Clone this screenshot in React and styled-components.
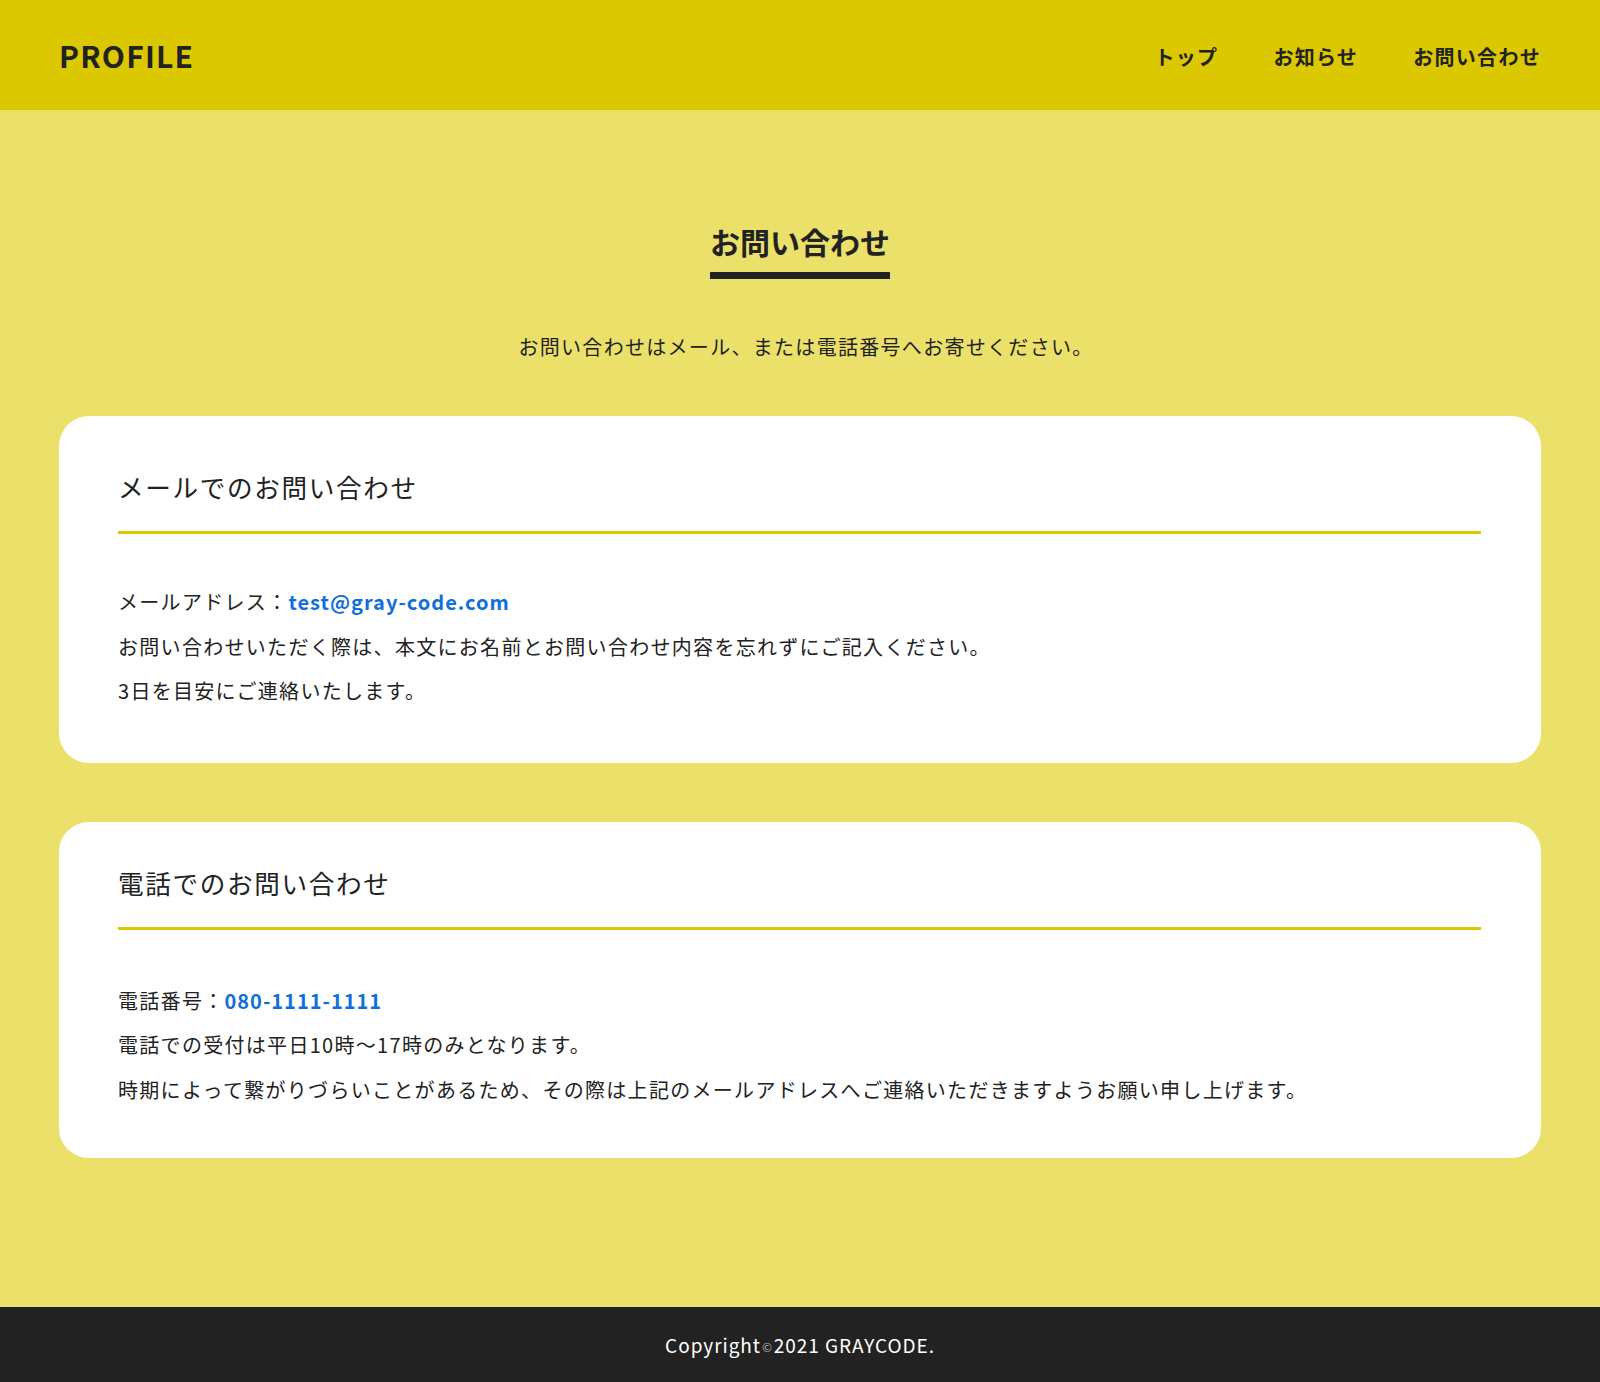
import React from 'react';
import styled, { createGlobalStyle } from 'styled-components';

const GlobalStyle = createGlobalStyle`
  body, html {
    margin: 0;
    padding: 0;
  }
  body {
    font-family: "Noto Sans CJK JP", "Noto Sans", sans-serif;
    background: #ebe16a;
    color: #222;
  }
`;

const Page = styled.div`
  min-height: 100vh;
  display: flex;
  flex-direction: column;
`;

const Header = styled.header`
  height: 110px;
  background: #dbc800;
  display: flex;
  align-items: center;
  justify-content: space-between;
  padding: 0 59px;
  box-sizing: border-box;
`;

const Logo = styled.h1`
  margin: 0;
  font-size: 30px;
  font-weight: 700;
  line-height: 1;
  letter-spacing: 0.04em;
  color: #222;
`;

const Nav = styled.ul`
  display: flex;
  gap: 55px;
  list-style: none;
  margin: 0;
  padding: 0;
`;

const NavLink = styled.a`
  font-size: 20px;
  font-weight: 700;
  color: #222;
  text-decoration: none;
  letter-spacing: 0.065em;
  line-height: 1;
  display: block;
  padding-top: 4px;
`;

const Main = styled.main`
  flex: 1;
  display: flex;
  flex-direction: column;
  align-items: center;
  padding: 110px 59px 148px;
`;

const PageTitle = styled.h2`
  display: inline-block;
  margin: 0;
  font-size: 30px;
  font-weight: 700;
  line-height: 43px;
  padding-bottom: 9px;
  border-bottom: 7px solid #222;
`;

const Lead = styled.p`
  margin: 53px 0 54px;
  padding-left: 12px;
  font-size: 20px;
  line-height: 30px;
  letter-spacing: 0.065em;
`;

const Card = styled.section`
  width: 100%;
  box-sizing: border-box;
  background: #fff;
  border-radius: 30px;
  padding: ${(p) => p.$top}px 60px ${(p) => p.$bottom}px 59px;

  & + & {
    margin-top: 59px;
  }
`;

const CardTitle = styled.h3`
  margin: 0 0 ${(p) => p.$gap}px;
  font-size: 25.6px;
  font-weight: 400;
  line-height: 40px;
  letter-spacing: 0.065em;
  padding-bottom: 24px;
  border-bottom: 3px solid #dbc800;
`;

const Text = styled.p`
  margin: 0;
  font-size: 20px;
  line-height: 44.5px;
  letter-spacing: 0.065em;
`;

const Link = styled.a`
  color: #106fdc;
  font-weight: 700;
  text-decoration: none;
  letter-spacing: 0.05em;
`;

const Footer = styled.footer`
  height: 75px;
  background: #222;
  color: #fff;
  display: flex;
  align-items: center;
  justify-content: center;
  font-size: 19px;
  letter-spacing: 0.05em;
`;

const Copy = styled.small`
  font-size: 12px;
  color: #bbb;
  margin: 4px 1px 0;
`;

const navItems = ['トップ', 'お知らせ', 'お問い合わせ'];

const App = () => (
  <>
    <GlobalStyle />
    <Page>
      <Header>
        <Logo>PROFILE</Logo>
        <nav>
          <Nav>
            {navItems.map((item) => (
              <li key={item}>
                <NavLink href="#">{item}</NavLink>
              </li>
            ))}
          </Nav>
        </nav>
      </Header>

      <Main>
        <PageTitle>お問い合わせ</PageTitle>
        <Lead>お問い合わせはメール、または電話番号へお寄せください。</Lead>

        <Card $top={51} $bottom={49}>
          <CardTitle $gap={46}>メールでのお問い合わせ</CardTitle>
          <Text>
            メールアドレス：<Link href="#">test@gray-code.com</Link>
          </Text>
          <Text>お問い合わせいただく際は、本文にお名前とお問い合わせ内容を忘れずにご記入ください。</Text>
          <Text>3日を目安にご連絡いたします。</Text>
        </Card>

        <Card $top={41} $bottom={46}>
          <CardTitle $gap={49}>電話でのお問い合わせ</CardTitle>
          <Text>
            電話番号：<Link href="#">080-1111-1111</Link>
          </Text>
          <Text>電話での受付は平日10時〜17時のみとなります。</Text>
          <Text>時期によって繋がりづらいことがあるため、その際は上記のメールアドレスへご連絡いただきますようお願い申し上げます。</Text>
        </Card>
      </Main>

      <Footer>
        Copyright<Copy>©</Copy>2021 GRAYCODE.
      </Footer>
    </Page>
  </>
);

export default App;
